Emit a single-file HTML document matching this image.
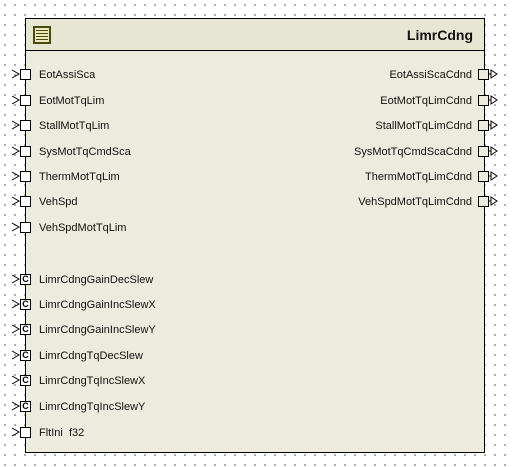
<!DOCTYPE html>
<html><head><style>
body{margin:0;width:513px;height:467px;overflow:hidden;background:#fff;
background-image:radial-gradient(circle,#444 0.6px,transparent 0.9px);background-size:10px 10px;background-position:0px 0px;
font-family:"Liberation Sans",sans-serif;position:relative}
.box{position:absolute;left:25px;top:18px;width:458px;height:433px;border:1px solid #000;background:#ecebde}
.hdr{position:absolute;left:0;top:0;width:458px;height:31px;border-bottom:1px solid #000;background:#e6e6d2}
.title{position:absolute;right:11px;top:8px;font-weight:bold;font-size:14px;color:#111}
.ico{position:absolute;left:7px;top:7px;width:14px;height:14px;border:2px solid #4a4a10;background:#ecebc0;box-sizing:content-box}
.ico i{display:block;height:1px;background:#4a4a10;margin:2px 1px 0}
.l,.r{position:absolute;font-size:11px;color:#111}
.l{left:39px}.r{right:41px;text-align:right}
.sq{position:absolute;width:9px;height:9px;border:1px solid #000;background:#fff}
.sq.c{background:#fff;font:bold 9px "Liberation Sans",sans-serif;color:#000;text-align:center;line-height:9px}
</style></head><body>
<div class="box"><div class="hdr"><div class="ico"><i></i><i></i><i></i><i></i></div><div class="title">LimrCdng</div></div></div>
<svg width="513" height="467" style="position:absolute;left:0;top:0">
<g stroke="#000" fill="none" stroke-width="1">
</g>
</svg>
<div id="c"></div>
<script>
var L=[["EotAssiSca",74],["EotMotTqLim",100],["StallMotTqLim",125],["SysMotTqCmdSca",151],["ThermMotTqLim",176],["VehSpd",201],["VehSpdMotTqLim",227],["LimrCdngGainDecSlew",279,1],["LimrCdngGainIncSlewX",304,1],["LimrCdngGainIncSlewY",329,1],["LimrCdngTqDecSlew",355,1],["LimrCdngTqIncSlewX",380,1],["LimrCdngTqIncSlewY",406,1],["FltIni&nbsp; f32",432]];
var R=[["EotAssiScaCdnd",74],["EotMotTqLimCdnd",100],["StallMotTqLimCdnd",125],["SysMotTqCmdScaCdnd",151],["ThermMotTqLimCdnd",176],["VehSpdMotTqLimCdnd",201]];
var h="",s="";
L.forEach(function(a){var y=a[1];h+='<div class="l" style="top:'+(y-5)+'px">'+a[0]+'</div>';
h+='<div class="sq'+(a[2]?' c':'')+'" style="left:20px;top:'+(y-5)+'px">'+(a[2]?'C':'')+'</div>';
s+='<path d="M12 '+(y-4)+' L19 '+y+' L12 '+(y+4)+'" stroke="#000" fill="none"/>';});
R.forEach(function(a){var y=a[1];h+='<div class="r" style="top:'+(y-5)+'px;right:41px">'+a[0]+'</div>';
h+='<div class="sq" style="left:478px;top:'+(y-5)+'px;background:#ecebde"></div>';
s+='<path d="M489 '+y+' H491 M491 '+(y-4)+' L497 '+y+' L491 '+(y+4)+' Z" stroke="#000" fill="#fff"/>';});
document.getElementById('c').innerHTML=h;
document.querySelector('svg g').innerHTML=s;
</script>
</body></html>
